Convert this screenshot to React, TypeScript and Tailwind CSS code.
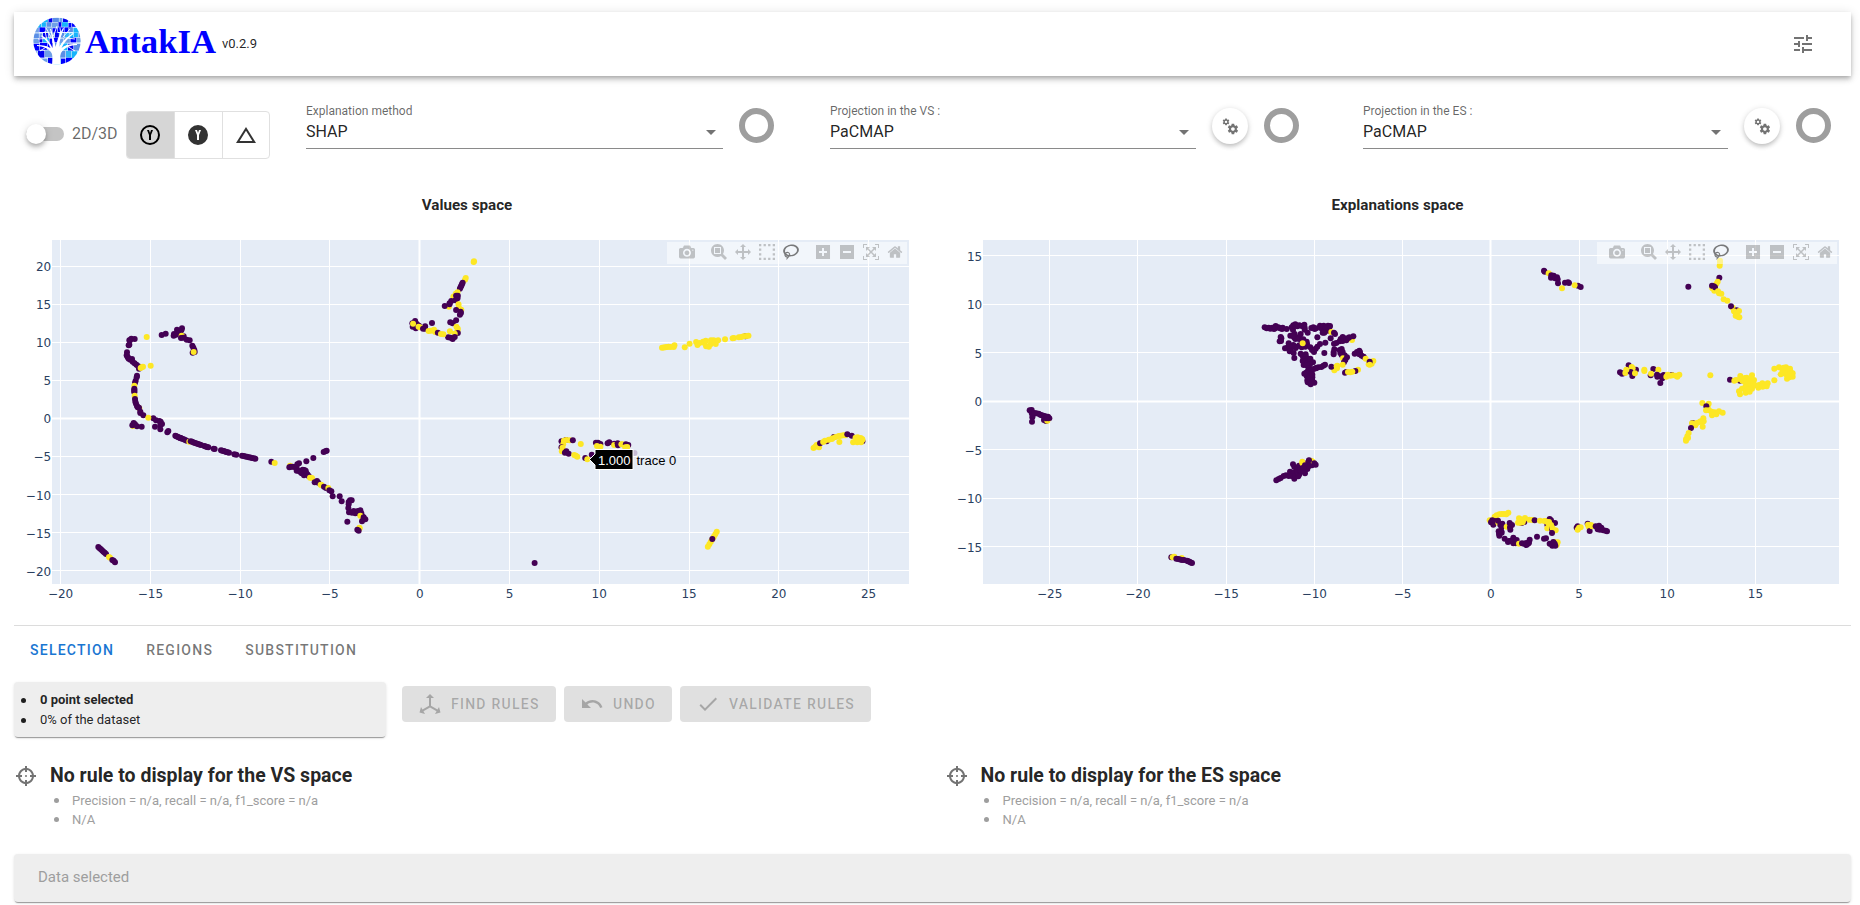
import React from "react";

const DARK = "#440154";
const GOLD = "#fde725";

type Dot = { x: number; y: number; c: string };
type Frame = { ox: number; oy: number; sx: number; sy: number };

/*
 * Point lists are compact strings. "x,y" is one marker, "x,y>x,y*n" is a run of
 * n markers between two ends, and "D" / "Y" switches the colour.
 */
function dots(frame: Frame, src: string): Dot[] {
  const out: Dot[] = [];
  let c = DARK;
  const push = (x: number, y: number) =>
    out.push({ x: frame.ox + x / frame.sx, y: frame.oy + y / frame.sy, c });
  for (const tok of src.trim().split(/\s+/)) {
    if (tok === "D") c = DARK;
    else if (tok === "Y") c = GOLD;
    else if (tok.includes(">")) {
      const [range, n] = tok.split("*");
      const [a, b] = range.split(">").map((p) => p.split(",").map(Number));
      const k = Number(n);
      for (let i = 0; i < k; i++) {
        const t = i / (k - 1);
        push(a[0] + (b[0] - a[0]) * t, a[1] + (b[1] - a[1]) * t);
      }
    } else {
      const [x, y] = tok.split(",").map(Number);
      push(x, y);
    }
  }
  return out;
}

const valuesDots: Dot[] = [
  ...dots(
    { ox: 0, oy: 230, sx: 3, sy: 3 },
    `Y 440,321 452,407 D 404,327 390,331 394,326 388,331 386,346 388,344 381,367 380,376>386,386*4 396,387 391,389 398,395>415,409*4 417,416 416,411
     Y 422,414 426,411 429,410 D 411,437 410,442 407,452 405,458 Y 403,467 D 403,476>403,487*4 Y 404,497 D 405,507 406,515 408,521 411,528 Y 418,535 D 413,532 417,533 421,545 421,549 430,556
     D 460,565 Y 445,563 D 468,571 478,573 482,575 486,582 481,585 465,590 481,598 505,603 502,607
     Y 399,588 D 401,579 397,586 405,583 411,589 425,590
     D 485,315 497,311 531,299 546,295 544,301 533,307 522,312 521,317 528,314 537,310 551,319 Y 545,317 D 543,324 550,323 560,329 569,331 577,347 580,353 583,360 578,368 584,366 Y 581,366
     D 526,617>542,625*6 542,624>560,632*5 Y 568,635 D 572,634>603,645*8 613,648>625,652*4 641,656 644,657 663,661>687,668*7 703,673 709,674 726,677>766,686*9
     814,695 Y 824,699 D 980,662 976,664 971,666 940,684 919,694 897,700 892,703 Y 870,707 D 868,712 872,710 878,710 884,711 890,715 908,719 913,720 890,722 897,723 905,730 914,732 918,728 922,733 912,736 902,727 917,722
     926,738 Y 930,743 936,744 D 944,757 951,753 955,758 Y 962,764 964,765 D 972,770 978,774 Y 985,774 D 988,781 994,784 998,799 1019,799 1025,814 1046,816 1050,811 1055,811 1046,823 1045,834 1047,847 1056,848 1061,843 1066,850 1073,843 1075,850 1081,841 1084,850 1088,860 Y 1081,857 D 1091,862 1096,868 1086,874 1042,875 Y 1078,893 1079,895 D 1072,899 1076,902
     D 295,951>318,972*7 Y 327,981 330,983 D 337,990 341,992 345,997`,
  ),
  ...dots(
    { ox: 380, oy: 230, sx: 2.904, sy: 3 },
    `Y 272,96 273,94 247,149 249,144 D 232,176>240,158*5 Y 225,187 220,191 213,200 D 221,197 226,197 225,205 219,211 207,213 202,220 Y 228,223 200,230 D 188,228 202,223 Y 229,233 236,239 D 221,240 234,245 235,249 232,254
     D 221,271 211,280 204,277 151,279 Y 222,290 226,296 225,303 D 226,309 Y 203,304 217,311 D 217,321 205,323 198,322 211,327
     D 102,273 94,280 95,290 104,295 107,282 Y 96,281 D 113,287 131,289 131,296 Y 112,290 116,292 D 125,296 Y 141,303 148,302 157,299 160,306 D 168,308 Y 177,312 184,313
     D 1061,319 Y 819,353>838,350*5 844,351 855,346 853,351 885,352 899,341 918,336 922,345 928,339 938,335 942,339 946,332 947,349 955,350 961,331 960,343 965,337 969,331 975,342 972,336 982,331 1002,328 1024,325 1028,324 1042,322 1049,321 1056,319 1064,318 1070,317
     D 527,634 540,630 Y 534,632 541,630 551,631 D 560,631 Y 583,642 532,643 D 527,652 Y 530,653 528,664 D 537,668 541,664 548,671 Y 564,675 569,677 573,680 D 596,684 615,674 Y 602,688
     D 627,638 633,638 640,642 Y 630,648 640,650 D 661,640 666,637 680,641 Y 680,645 D 690,640 691,646 Y 701,643 704,643 D 714,643 721,645 Y 718,651 712,652
     D 1297,634 1318,621 1401,634 Y 1259,654 1264,650 1268,645 1275,652 D 1278,640 Y 1287,636 1292,632 1303,629 1312,627 1314,625 1323,621 1332,618 1338,617 1345,616 1334,636 1351,616 D 1357,613 1370,617 Y 1374,637 1381,623 1387,622 1390,631 1386,637 1396,624 1401,629 1397,637 1388,630 1400,627 1396,634
     Y 978,905>952,950*7 D 965,927 449,999`,
  ),
];

const explanationDots: Dot[] = [
  ...dots(
    { ox: 960, oy: 230, sx: 3, sy: 3 },
    `D 209,541 215,540 215,549 219,551 229,550 236,551 245,556 217,562 216,575 218,556 223,549 241,554 250,557 256,559 253,560 264,560 268,565 252,570 258,573 Y 262,572 D 258,565 265,565 262,563
     D 634,982 Y 638,982 643,980 665,984 D 649,986>666,990*4 672,990 681,992>696,999*5
     D 949,751 956,747 962,744 971,738 978,736 986,738 999,703 1003,711 990,725 1001,728 1011,718 1017,707 1003,746 995,738 1006,738 1018,733 1012,722 1020,721 1015,739 1035,730 1030,722 1042,717 1045,709 1047,692 1040,700 Y 1027,695 1027,699 D 1056,706 Y 1054,692 1058,695 D 1047,691 1063,700 1067,704 1048,707 1035,706 1030,713`,
  ),
  ...dots(
    { ox: 1255, oy: 315, sx: 3, sy: 3 },
    `D 29,37 35,40 41,38 46,41 52,38 57,42 62,33 61,40 70,37 75,40 83,38 81,42 95,42 77,66 79,70 74,79 78,78
     110,37 114,45 115,31 121,28 127,34 133,31 140,33 148,29 149,38 149,44 112,37 120,32 137,57 158,53 106,62 117,67 126,68 134,65 121,72 132,72 141,76 145,73 119,57 114,62
     169,39 175,37 179,42 183,40 195,32 197,39 206,32 203,42 210,38 219,32 223,37 215,46 203,53 209,48 219,47 213,39 225,33 208,53
     187,67 Y 229,51 D 237,53 240,57 227,70 211,83 101,85 115,90 124,95 133,91 90,100 97,98 106,102 104,109 116,114 118,129 122,99 140,97 151,95 156,87 155,80 111,93 103,93 142,88 166,97 171,105 177,111 182,101 187,95 195,87
     Y 291,75 D 237,86 244,84 254,79 257,72 263,66 263,78 268,70 274,76 280,69 295,64 283,67
     Y 143,85 D 208,114 238,103 236,112 236,118 254,105 256,114 260,102 263,111 260,120 269,121 Y 264,130 D 276,127 271,135 267,142
     299,116 306,111 313,107 315,112 313,118 320,122 326,125 Y 332,131 355,138 341,148 350,146 D 344,140 Y 344,149
     D 137,116 142,121 152,118 145,128 153,126 143,138 150,133 158,133 149,140 161,139 166,131 174,142 155,146 165,148 146,150 155,151 161,160 159,167 153,173 160,177 164,170 170,164 176,162 183,159 190,157 199,156 205,152 210,149 183,160 170,173 160,186 155,183 165,185 172,187 157,196 158,202 165,205 165,195 172,197 178,203 164,189 167,208 148,176 172,179
     Y 238,166 247,152 246,160 D 229,155 Y 245,154 263,149 D 270,173 274,171 Y 309,164 D 301,168 Y 279,171 286,172 292,170`,
  ),
  ...dots(
    { ox: 1400, oy: 230, sx: 3, sy: 3 },
    `D 432,122 434,125 Y 446,130 D 454,136 453,143 461,137 465,145 471,142 473,148 474,160 Y 486,175 D 495,158 504,157 507,159 534,167 Y 524,166 D 542,171
     Y 960,92 960,98 959,107 D 865,170 958,143 Y 953,155 949,162 941,169 937,175 D 936,167 941,169 Y 943,182 D 945,172 Y 954,184 957,190 964,191 971,208 982,212 998,233 D 993,229 1010,241 Y 1002,244 1017,243 1010,250 1007,257 1014,260 1018,262
     D 660,427 666,431 671,430 Y 676,429 680,421 D 686,406 708,419 Y 695,411 698,415 D 692,426 697,438 Y 705,430 679,419 733,419 733,423 D 752,436 760,417 Y 753,431 775,419 D 771,434 772,440 780,439 787,440 791,435 781,459 787,445 815,435 Y 799,440 803,434 811,437 818,436 828,437 832,440 838,434 931,436
     D 990,449 1020,452 Y 1003,452 1008,450 1021,438 1020,447 1027,452 1035,444 1040,443 1034,455 1039,461 1049,450 1056,436 1053,447 1062,450 1052,460 1060,462 1049,468 1043,474 1036,471 1026,476 1017,484 1020,493 1037,488 1049,485 1044,479 1056,476 1065,466 1075,473 1077,465 1087,460 1088,470 1097,467 1103,460 1100,469 1123,451
     1123,416 1137,412 1142,433 1148,421 1150,416 1158,412 1157,424 1149,430 1158,433 1165,417 1163,428 1161,446 1170,416 1172,425 1171,437 1178,430 1178,440 1168,442 1151,413 1171,431
     907,519 926,521 923,531 D 919,529 Y 918,541 927,541 935,545 936,556 944,547 949,553 957,544 968,548 938,549 910,565 902,574 911,574 D 878,579 Y 876,580 890,579 886,586 899,576 908,590 D 873,594 Y 866,609 862,619 864,624 858,628 858,632
     Y 269,871 290,856 284,860 298,853 305,852 312,852 319,853 325,848 D 277,871 273,877 280,884 285,873 Y 295,878 303,882 D 294,872 307,881 301,885 305,891 Y 320,890 D 329,879 336,885 330,892 331,899 296,904 304,904 297,911 298,917 305,908 314,926 326,933 324,936 333,932 340,923 339,930 340,940 347,940 350,930 Y 357,941 D 366,940 372,941 379,945 379,939 387,938 389,929 384,941
     Y 354,878 357,865 362,868 D 365,879 373,876 Y 361,878 370,871 375,864 368,877 388,869 397,870 D 404,871 Y 420,872 433,873 437,873 D 449,867 453,871 442,884 Y 440,875 447,876 442,895 D 465,879 Y 447,884 453,885 D 456,897 Y 457,893 467,901 D 456,909 438,925 432,926 411,920
     Y 463,936 473,937 470,945 D 449,941 457,947 464,941 460,936 466,947
     D 533,889 530,893 Y 533,899 537,893 542,892 D 563,881 Y 564,884 566,890 D 569,903 Y 573,885 576,889 D 587,889 592,891 597,887 593,898 600,899 604,893 610,901 617,902 621,904`,
  ),
];

type Axis = { at: number; label: string };
const ticks = (from: number, to: number, zero: number, unit: number): Axis[] => {
  const out: Axis[] = [];
  for (let v = from; v <= to; v += 5)
    out.push({ at: zero + v * unit, label: v < 0 ? `−${-v}` : `${v}` });
  return out;
};

type Area = { x: number; y: number; w: number; h: number };

function Scatter({
  view,
  area,
  xs,
  ys,
  points,
  children,
}: {
  view: Area;
  area: Area;
  xs: Axis[];
  ys: Axis[];
  points: Dot[];
  children?: React.ReactNode;
}) {
  return (
    <svg
      viewBox={`${view.x} ${view.y} ${view.w} ${view.h}`}
      width={view.w}
      height={view.h}
      className="block font-['DejaVu_Sans',sans-serif] text-[12px]"
    >
      <rect x={area.x} y={area.y} width={area.w} height={area.h} fill="#e5ecf6" />
      {xs.map((t) => (
        <g key={t.label}>
          <rect
            x={Math.round(t.at - 0.5) - (t.label === "0" ? 0.5 : 0)}
            y={area.y}
            width={t.label === "0" ? 2 : 1}
            height={area.h}
            fill="#fff"
          />
          <text x={t.at} y={597.6} textAnchor="middle" fill="#2a3f5f">
            {t.label}
          </text>
        </g>
      ))}
      {ys.map((t) => (
        <g key={t.label}>
          <rect
            x={area.x}
            y={Math.round(t.at - 0.5) - (t.label === "0" ? 0.5 : 0)}
            width={area.w}
            height={t.label === "0" ? 2 : 1}
            fill="#fff"
          />
          <text x={area.x - 0.8} y={t.at + 4.8} textAnchor="end" fill="#2a3f5f">
            {t.label}
          </text>
        </g>
      ))}
      {points.map((p, i) => (
        <circle key={i} cx={p.x} cy={p.y} r={3} fill={p.c} />
      ))}
      {children}
    </svg>
  );
}

const barIcons: { w: number; d: string; gap?: boolean; on?: boolean }[] = [
  {
    w: 1000,
    gap: true,
    d: "m500 450c-83 0-150-67-150-150 0-83 67-150 150-150 83 0 150 67 150 150 0 83-67 150-150 150z m400 150h-120c-16 0-34 13-39 29l-31 93c-6 15-23 28-40 28h-340c-16 0-34-13-39-28l-31-94c-6-15-23-28-40-28h-120c-55 0-100-45-100-100v-450c0-55 45-100 100-100h800c55 0 100 45 100 100v450c0 55-45 100-100 100z m-400-550c-138 0-250 112-250 250 0 138 112 250 250 250 138 0 250-112 250-250 0-138-112-250-250-250z m365 380c-19 0-35 16-35 35 0 19 16 35 35 35 19 0 35-16 35-35 0-19-16-35-35-35z",
  },
  {
    w: 1000,
    gap: true,
    d: "m1000-25l-250 251c40 63 63 138 63 218 0 224-182 406-407 406-224 0-406-182-406-406s183-406 407-406c80 0 155 22 218 62l250-250 125 125z m-812 250l0 438 437 0 0-438-437 0z m62 375l313 0 0-312-313 0 0 312z",
  },
  {
    w: 1000,
    d: "m1000 350l-187 188 0-125-250 0 0 250 125 0-188 187-187-187 125 0 0-250-250 0 0 125-188-188 186-187 0 125 252 0 0-250-125 0 187-188 188 188-125 0 0 250 250 0 0-126 187 188z",
  },
  {
    w: 1000,
    d: "m0 850l0-143 143 0 0 143-143 0z m286 0l0-143 143 0 0 143-143 0z m285 0l0-143 143 0 0 143-143 0z m286 0l0-143 143 0 0 143-143 0z m-857-286l0-143 143 0 0 143-143 0z m857 0l0-143 143 0 0 143-143 0z m-857-285l0-143 143 0 0 143-143 0z m857 0l0-143 143 0 0 143-143 0z m-857-286l0-143 143 0 0 143-143 0z m286 0l0-143 143 0 0 143-143 0z m285 0l0-143 143 0 0 143-143 0z m286 0l0-143 143 0 0 143-143 0z",
  },
  {
    w: 1031,
    on: true,
    d: "m1018 538c-36 207-290 336-568 286-277-48-473-256-436-463 10-57 36-108 76-151-13-66 11-137 68-183 34-28 75-41 114-42l-55-70 0 0c-2-1-3-2-4-3-10-14-8-34 5-45 14-11 34-8 45 4 1 1 2 3 2 5l0 0 113 140c16 11 31 24 45 40 4 3 6 7 8 11 48-3 100 0 151 9 278 48 473 255 436 462z m-624-379c-80 14-149 48-197 96 42 42 109 47 156 9 33-26 47-66 41-105z m-187-74c-19 16-33 37-39 60 50-32 109-55 174-68-42-25-95-24-135 8z m360 75c-34-7-69-9-102-8 8 62-16 128-68 170-73 59-175 54-244-5-9 20-16 40-20 61-28 159 121 317 333 354s407-60 434-217c28-159-121-318-333-355z",
  },
  {
    w: 875,
    gap: true,
    d: "m1 787l0-875 875 0 0 875-875 0z m687-500l-187 0 0-187-125 0 0 187-188 0 0 125 188 0 0 187 125 0 0-187 187 0 0-125z",
  },
  { w: 875, d: "m0 788l0-876 875 0 0 876-875 0z m688-500l-500 0 0 125 500 0 0-125z" },
  {
    w: 1000,
    d: "m250 850l-187 0-63 0 0-62 0-188 63 0 0 188 187 0 0 62z m688 0l-188 0 0-62 188 0 0-188 62 0 0 188 0 62-62 0z m-875-938l0 188-63 0 0-188 0-62 63 0 187 0 0 62-187 0z m875 188l0-188-188 0 0-62 188 0 62 0 0 62 0 188-62 0z m-125 188l-1 0-93-94-156 156 156 156 92-93 2 0 0 250-250 0 0-2 93-92-156-156-156 156 94 92 0 2-250 0 0-250 0 0 93 93 157-156-157-156-93 94 0 0 0-250 250 0 0 0-94 93 156 157 156-157-93-93 0 0 250 0 0 250z",
  },
  {
    w: 928.6,
    d: "m786 296v-267q0-15-11-26t-25-10h-214v214h-143v-214h-214q-15 0-25 10t-11 26v267q0 1 0 2t0 2l321 264 321-264q1-1 1-4z m124 39l-34-41q-5-5-12-6h-2q-7 0-12 3l-386 322-386-322q-7-4-13-4-7 2-12 7l-35 41q-4 5-3 13t6 12l401 334q18 15 42 15t43-15l136-114v109q0 8 5 13t13 5h107q8 0 13-5t5-13v-227l122-102q5-5 6-12t-4-13z",
  },
];

function ModeBar({ className }: { className: string }) {
  return (
    <div className={`absolute flex h-[22px] w-[240px] bg-white/50 ${className}`}>
      {barIcons.map((b, i) => (
        <div key={i} className={b.gap ? "pl-2" : ""}>
          <div className="px-1 pt-[2px]">
            <svg viewBox={`0 0 ${b.w} 1000`} width={16} height={16} className="block">
              <path
                d={b.d}
                transform="matrix(1 0 0 -1 0 850)"
                fill={b.on ? "rgba(68,68,68,0.7)" : "rgba(68,68,68,0.3)"}
              />
            </svg>
          </div>
        </div>
      ))}
    </div>
  );
}

const icons = {
  tune: "M3,17V19H9V17H3M3,5V7H13V5H3M13,21V19H21V17H13V15H11V21H13M7,9V11H3V13H7V15H9V9H7M21,13V11H11V13H21M15,9H17V7H21V5H17V3H15V9Z",
  yOutline:
    "M9,7L11,12V17H13V12L15,7H13L12,10L11,7H9M12,2A10,10 0 0,1 22,12A10,10 0 0,1 12,22A10,10 0 0,1 2,12A10,10 0 0,1 12,2M12,4A8,8 0 0,0 4,12A8,8 0 0,0 12,20A8,8 0 0,0 20,12A8,8 0 0,0 12,4Z",
  ySolid:
    "M12,2A10,10 0 0,1 22,12A10,10 0 0,1 12,22A10,10 0 0,1 2,12A10,10 0 0,1 12,2M9,7L11,12V17H13V12L15,7H13L12,10L11,7H9Z",
  delta: "M12,7.77L18.39,18H5.61L12,7.77M12,4L2,20H22",
  cogs: "M15.9,18.45C17.25,18.45 18.35,17.35 18.35,16C18.35,14.65 17.25,13.55 15.9,13.55C14.54,13.55 13.45,14.65 13.45,16C13.45,17.35 14.54,18.45 15.9,18.45M21.1,16.68L22.58,17.84C22.71,17.95 22.75,18.13 22.66,18.29L21.26,20.71C21.17,20.86 21,20.92 20.83,20.86L19.09,20.16C18.73,20.44 18.33,20.67 17.91,20.85L17.64,22.7C17.62,22.87 17.47,23 17.3,23H14.5C14.32,23 14.18,22.87 14.15,22.7L13.89,20.85C13.46,20.67 13.07,20.44 12.71,20.16L10.96,20.86C10.81,20.92 10.62,20.86 10.54,20.71L9.14,18.29C9.05,18.13 9.09,17.95 9.22,17.84L10.7,16.68L10.65,16L10.7,15.31L9.22,14.16C9.09,14.05 9.05,13.86 9.14,13.71L10.54,11.29C10.62,11.13 10.81,11.07 10.96,11.13L12.71,11.84C13.07,11.56 13.46,11.32 13.89,11.15L14.15,9.29C14.18,9.13 14.32,9 14.5,9H17.3C17.47,9 17.62,9.13 17.64,9.29L17.91,11.15C18.33,11.32 18.73,11.56 19.09,11.84L20.83,11.13C21,11.07 21.17,11.13 21.26,11.29L22.66,13.71C22.75,13.86 22.71,14.05 22.58,14.16L21.1,15.31L21.15,16L21.1,16.68M6.69,8.07C7.56,8.07 8.26,7.37 8.26,6.5C8.26,5.63 7.56,4.92 6.69,4.92A1.58,1.58 0 0,0 5.11,6.5C5.11,7.37 5.82,8.07 6.69,8.07M10.03,6.94L11,7.68C11.07,7.75 11.09,7.87 11.03,7.97L10.13,9.53C10.08,9.63 9.96,9.67 9.86,9.63L8.74,9.18L8,9.62L7.81,10.81C7.79,10.92 7.7,11 7.59,11H5.79C5.67,11 5.58,10.92 5.56,10.81L5.4,9.62L4.64,9.18L3.52,9.63C3.41,9.67 3.3,9.63 3.24,9.53L2.34,7.97C2.28,7.87 2.31,7.75 2.39,7.68L3.34,6.94L3.31,6.5L3.34,6.06L2.39,5.32C2.31,5.25 2.28,5.13 2.34,5.03L3.24,3.47C3.3,3.37 3.41,3.33 3.52,3.37L4.63,3.82L5.4,3.38L5.56,2.19C5.58,2.08 5.67,2 5.79,2H7.59C7.7,2 7.79,2.08 7.81,2.19L8,3.38L8.74,3.82L9.86,3.37C9.96,3.33 10.08,3.37 10.13,3.47L11.03,5.03C11.09,5.13 11.07,5.25 11,5.32L10.03,6.06L10.06,6.5L10.03,6.94Z",
  axis: "M12,2L16,6H13V13.85L19.53,17.61L21,15.03L22.5,20.5L17,21.96L18.53,19.35L12,15.58L5.47,19.35L7,21.96L1.5,20.5L3,15.03L4.47,17.61L11,13.85V6H8L12,2Z",
  undo: "M12.5,8C9.85,8 7.45,9 5.6,10.6L2,7V16H11L7.38,12.38C8.77,11.22 10.54,10.5 12.5,10.5C16.04,10.5 19.05,12.81 20.1,16L22.47,15.22C21.08,11.03 17.15,8 12.5,8Z",
  check: "M21,7L9,19L3.5,13.5L4.91,12.09L9,16.17L19.59,5.59L21,7Z",
  caret: "M7,10L12,15L17,10H7Z",
  target:
    "M11,2V4.07C7.38,4.53 4.53,7.38 4.07,11H2V13H4.07C4.53,16.62 7.38,19.47 11,19.93V22H13V19.93C16.62,19.47 19.47,16.62 19.93,13H22V11H19.93C19.47,7.38 16.62,4.53 13,4.07V2M11,6.08V8H13V6.09C15.5,6.5 17.5,8.5 17.92,11H16V13H17.91C17.5,15.5 15.5,17.5 13,17.92V16H11V17.91C8.5,17.5 6.5,15.5 6.08,13H8V11H6.09C6.5,8.5 8.5,6.5 11,6.08M12,11A1,1 0 0,0 11,12A1,1 0 0,0 12,13A1,1 0 0,0 13,12A1,1 0 0,0 12,11Z",
};

function Icon({ d, size = 24, className = "" }: { d: string; size?: number; className?: string }) {
  return (
    <svg viewBox="0 0 24 24" width={size} height={size} className={`shrink-0 ${className}`}>
      <path d={d} fill="currentColor" fillRule="evenodd" />
    </svg>
  );
}

const mosaicColors = ["#0000ff", "#6f9fe8", "#17b4fa", "#0000ff", "#5b8fe6", "#0000f0", "#33b5f8"];

function Logo() {
  const tiles: React.ReactNode[] = [];
  let k = 3;
  let y = 0;
  for (let r = 0; r < 8; r++) {
    const h = r < 5 ? 5.2 : 7.4;
    let x = 0;
    while (x < 48) {
      k = (k * 37 + 11) % 101;
      const w = (r < 5 ? 3.5 : 5) + (k % 4);
      tiles.push(
        <rect
          key={`${r}-${x}`}
          x={x}
          y={y + (k % 3) * 0.4}
          width={w - 0.6}
          height={h - 0.6}
          fill={mosaicColors[k % mosaicColors.length]}
        />,
      );
      x += w;
    }
    y += h;
  }
  return (
    <svg viewBox="0 0 48 48" width={48} height={48} className="shrink-0">
      <clipPath id="disc">
        <circle cx="24" cy="24" r="23.6" />
      </clipPath>
      <g clipPath="url(#disc)">
        <rect width="48" height="48" fill="#e6f4ff" />
        {tiles}
        <path
          d="M19 48C20.500 41 20 37 17 34C14 31 10 29.500 4 29L4 28C10 28 14 29 17.500 31C16 27 13 23 8 19L9 18.300C14 22 17.500 26 19.500 31C20 26 19 20 17 12L18 12C20 18 21.800 24 22.500 30C24 24 26 18 30 11L31 11.500C28.500 17 26.500 23 26 30C29 25 33 20.500 40 16L40.500 17C35 21 31 25.500 28.500 31C32 28 37 26.500 44 27L44 28C36 28.500 31 31 28 36C26.800 39 27 43 27.500 48Z"
          fill="#fff"
        />
        <path
          d="M14 23.500L12 14M18 20L13 11M20.500 19L24 9M28 18L27 11M30 20L37 12M34 21L42 22M14 29.500L7 34M33 28.500L42 34M12 21.500L5 22"
          stroke="#fff"
          strokeWidth="0.9"
          fill="none"
        />
      </g>
    </svg>
  );
}

function Field({ label, value, className }: { label: string; value: string; className: string }) {
  return (
    <div className={`flex h-[45px] flex-col border-b border-[#8a8a8a] ${className}`}>
      <span className="h-[16px] text-[12px] leading-[14px] text-black/60">{label}</span>
      <div className="flex h-[24px] items-center justify-between text-[16px] leading-6 text-black/87">
        <span>{value}</span>
        <Icon d={icons.caret} className="text-black/55" />
      </div>
    </div>
  );
}

function Ring({ className = "" }: { className?: string }) {
  return (
    <span
      className={`mt-[5px] block size-[35px] shrink-0 rounded-full border-[6px] border-[#9e9e9e] ${className}`}
    />
  );
}

function CogButton({ className = "" }: { className?: string }) {
  return (
    <button
      className={`mt-[5px] flex size-9 shrink-0 items-center justify-center rounded-full bg-white text-black/55 shadow-[0_3px_5px_-1px_rgba(0,0,0,0.2),0_1px_6px_0_rgba(0,0,0,0.14)] ${className}`}
    >
      <Icon d={icons.cogs} size={18} />
    </button>
  );
}

function Bullet({ className }: { className: string }) {
  return <span className={`block size-[5px] shrink-0 rounded-full bg-current ${className}`} />;
}

function RuleBlock({ title }: { title: string }) {
  return (
    <section className="w-[930.500px] shrink-0">
      <div className="flex h-8 items-center">
        <Icon d={icons.target} className="mt-px text-black/55" />
        <h3 className="mt-px ml-3 text-[19.500px] leading-8 font-bold text-black/87">{title}</h3>
      </div>
      <ul className="pl-[39.500px] text-[13px] leading-[19px] text-[#9e9e9e]">
        <li className="flex items-center">
          <Bullet className="mr-[13.500px]" />
          Precision = n/a, recall = n/a, f1_score = n/a
        </li>
        <li className="flex items-center">
          <Bullet className="mr-[13.500px]" />
          N/A
        </li>
      </ul>
    </section>
  );
}

function ActionButton({ icon, label, className }: { icon: string; label: string; className: string }) {
  return (
    <button
      className={`flex h-9 items-center rounded bg-[#e0e0e0] text-[14px] font-medium tracking-[0.0892857em] text-black/26 uppercase ${className}`}
    >
      <Icon d={icon} className="mr-[9px]" />
      {label}
    </button>
  );
}

export default function App() {
  return (
    <div className="flex h-[905px] w-[1860px] flex-col overflow-hidden bg-white pt-3 pl-[14px] font-[Roboto,sans-serif] text-black/87">
      <header className="flex h-16 w-[1837px] shrink-0 items-center bg-white pr-9 pl-[19px] shadow-[0_2px_4px_-1px_rgba(0,0,0,0.2),0_4px_5px_0_rgba(0,0,0,0.14),0_1px_10px_0_rgba(0,0,0,0.12)]">
        <div className="-mt-[6px]">
          <Logo />
        </div>
        <svg width={134} height={40} viewBox="0 0 134 40" className="-mt-[6px] ml-[3px]">
          <text
            x="1"
            y="32"
            textLength="131"
            lengthAdjust="spacingAndGlyphs"
            fill="#0000ff"
            className="font-['Liberation_Serif',serif] text-[34px] font-bold"
          >
            AntakIA
          </text>
        </svg>
        <span className="ml-[4px] text-[13px]">v0.2.9</span>
        <Icon d={icons.tune} className="ml-auto text-black/55" />
      </header>

      <div className="flex h-[120px] shrink-0 pt-[27px]">
        <div className="mt-[21px] flex h-[20px] w-[112px] items-center pl-[12px]">
          <div className="flex h-[14px] w-[38px] items-center rounded-full bg-[#c4c4c4]">
            <span className="size-5 shrink-0 rounded-full bg-white shadow-[0_2px_4px_-1px_rgba(0,0,0,0.2),0_4px_5px_0_rgba(0,0,0,0.14),0_1px_10px_0_rgba(0,0,0,0.12)]" />
          </div>
          <span className="ml-2 text-[16px] text-black/60">2D/3D</span>
        </div>
        <div className="mt-[8px] flex h-12 w-[144px] divide-x divide-[#e0e0e0] overflow-hidden rounded border border-[#e0e0e0]">
          <div className="flex flex-1 items-center justify-center bg-[#d6d6d6] pr-[2px] text-black">
            <Icon d={icons.yOutline} />
          </div>
          <div className="flex flex-1 items-center justify-center pr-[2px] text-black/80">
            <Icon d={icons.ySolid} />
          </div>
          <div className="flex flex-1 items-center justify-center pr-px text-black/80">
            <Icon d={icons.delta} />
          </div>
        </div>
        <Field label="Explanation method" value="SHAP" className="mt-px ml-[36px] w-[417px]" />
        <Ring className="ml-4" />
        <Field label="Projection in the VS :" value="PaCMAP" className="mt-px ml-[56px] w-[366px]" />
        <CogButton className="ml-4" />
        <Ring className="ml-4" />
        <Field label="Projection in the ES :" value="PaCMAP" className="mt-px ml-[64px] w-[365px]" />
        <CogButton className="ml-4" />
        <Ring className="ml-4" />
      </div>

      <div className="flex h-[430px] w-[1837px] shrink-0 border-b border-[#dcdcdc]">
        <figure className="relative w-[930px]">
          <figcaption className="h-[36px] pt-px pr-6 text-center text-[15.200px] leading-4 font-bold">
            Values space
          </figcaption>
          <Scatter
            view={{ x: 14, y: 232, w: 930, h: 380 }}
            area={{ x: 52, y: 240, w: 857, h: 344 }}
            xs={ticks(-20, 25, 419.7, 17.955)}
            ys={ticks(-20, 20, 418.6, -7.61)}
            points={valuesDots}
          >
            <circle cx={634.5} cy={453} r={3} fill={DARK} opacity={0.2} />
            <path d="M589.5 459.500L595 454V449.500H633V469.500H595V465Z" fill="#000" stroke="#fff" strokeWidth="1" />
            <g className="font-['Liberation_Sans',sans-serif] text-[13px]">
              <text x={598} y={464.6} fill="#fff">
                1.000
              </text>
              <text x={636.5} y={464.6} fill="#000">
                trace 0
              </text>
            </g>
          </Scatter>
          <ModeBar className="top-[46px] left-[653px]" />
        </figure>
        <figure className="relative w-[907px]">
          <figcaption className="h-[36px] pt-px text-center text-[15.200px] leading-4 font-bold">
            Explanations space
          </figcaption>
          <Scatter
            view={{ x: 944, y: 232, w: 907, h: 380 }}
            area={{ x: 983, y: 240, w: 856, h: 344 }}
            xs={ticks(-25, 15, 1490.8, 17.645)}
            ys={ticks(-15, 15, 401.2, -9.7)}
            points={explanationDots}
          />
          <ModeBar className="top-[46px] left-[653px]" />
        </figure>
      </div>

      <nav className="flex h-12 shrink-0 items-center text-[14px] font-medium tracking-[0.0892857em] text-black/54">
        <span className="px-4 text-[#1976d2]">SELECTION</span>
        <span className="px-4">REGIONS</span>
        <span className="px-4">SUBSTITUTION</span>
      </nav>

      <div className="mt-[8px] flex h-[55px] shrink-0 items-start">
        <ul className="h-[55px] w-[372px] rounded bg-[#eeeeee] pt-[8px] pl-[7px] text-[13px] leading-5 shadow-[0_2px_1px_-1px_rgba(0,0,0,0.35),0_1px_3px_0_rgba(0,0,0,0.12)]">
          <li className="flex items-center font-bold">
            <Bullet className="mr-[14px]" />0 point selected
          </li>
          <li className="flex items-center">
            <Bullet className="mr-[14px]" />
            0% of the dataset
          </li>
        </ul>
        <ActionButton icon={icons.axis} label="Find rules" className="mt-1 ml-[16px] w-[154px] pl-4" />
        <ActionButton icon={icons.undo} label="Undo" className="mt-1 ml-2 w-[108px] pl-4" />
        <ActionButton icon={icons.check} label="Validate rules" className="mt-1 ml-2 w-[191px] pl-4" />
      </div>

      <div className="mt-[22px] flex h-[95px] shrink-0">
        <RuleBlock title="No rule to display for the VS space" />
        <RuleBlock title="No rule to display for the ES space" />
      </div>

      <div className="flex h-[48px] w-[1837px] shrink-0 items-center rounded bg-[#eeeeee] pb-[2px] pl-6 text-[15px] text-[#9e9e9e] shadow-[0_2px_1px_-1px_rgba(0,0,0,0.35),0_1px_3px_0_rgba(0,0,0,0.12)]">
        Data selected
      </div>
    </div>
  );
}
